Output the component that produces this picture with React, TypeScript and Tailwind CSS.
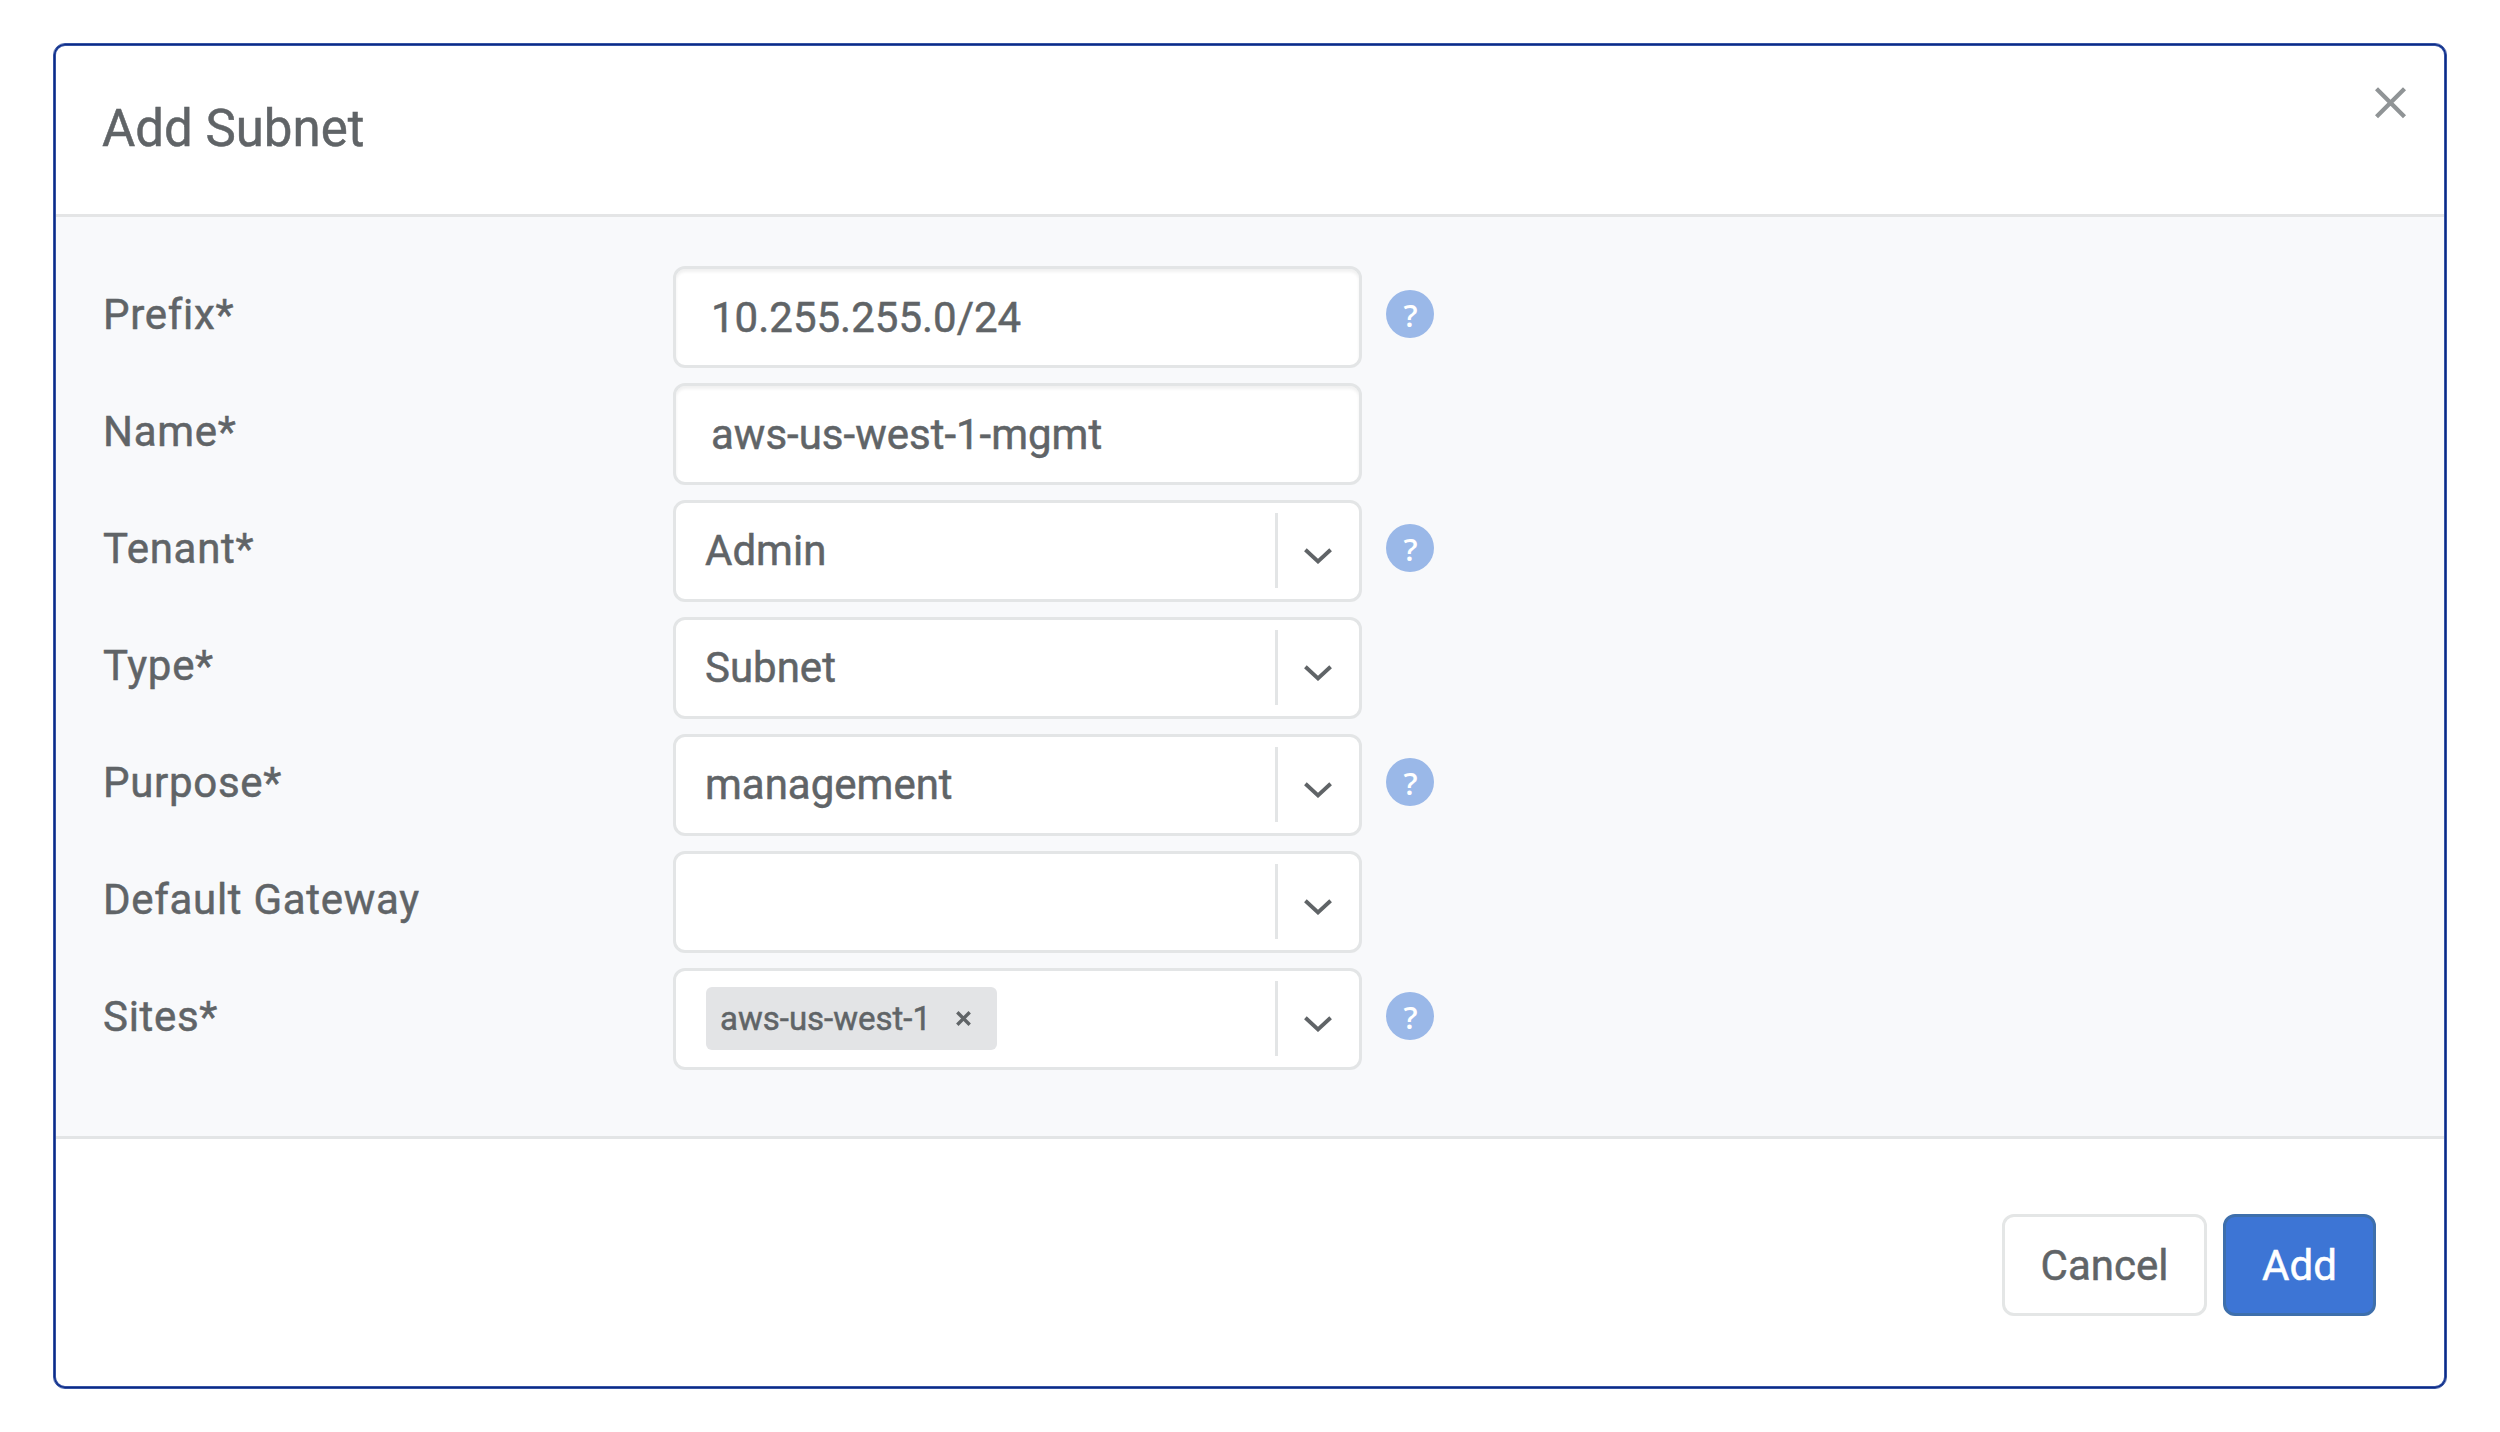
import type { ReactNode } from "react";

function Help() {
  return (
    <span className="mt-6 ml-6 flex size-12 shrink-0 items-center justify-center rounded-full bg-[#9ab8e8] pt-[3px] pl-px font-['Open_Sans'] text-[31px] leading-none font-semibold text-white [-webkit-text-stroke:0px]">
      ?
    </span>
  );
}

function Chevron() {
  return (
    <svg className="mt-[45px] ml-[26px] h-4 w-7" viewBox="0 0 28 16" fill="none" stroke="#606467" strokeWidth="3.9">
      <path d="M1.4 1.8 14 13.4 26.6 1.8" />
    </svg>
  );
}

function Input({ value }: { value: string }) {
  return (
    <div className="flex h-[102px] w-[689px] items-center rounded-xl border-[3px] border-[#e3e5e6] bg-white pl-[35px] shadow-[inset_0_3px_3px_rgba(0,0,0,0.06)]">
      {value}
    </div>
  );
}

function Select({ children }: { children?: ReactNode }) {
  return (
    <div className="flex h-[102px] w-[689px] rounded-xl border-[3px] border-[#e3e5e6] bg-white pl-[29px]">
      <div className="flex flex-1 items-center pb-0.5">{children}</div>
      <div className="mt-2.5 h-[75px] w-[3px] bg-[#e3e5e6]" />
      <div className="w-[81px]">
        <Chevron />
      </div>
    </div>
  );
}

function Chip({ label }: { label: string }) {
  return (
    <span className="mt-px ml-px flex h-[63px] w-[291px] items-center rounded-md bg-[#e3e4e6] pl-3.5 text-[33px]">
      <span className="w-[236px] pb-px">{label}</span>
      <svg className="size-[15px]" viewBox="0 0 15 15" stroke="#606467" strokeWidth="3.4">
        <path d="M1.3 1.3 13.7 13.7M13.7 1.3 1.3 13.7" />
      </svg>
    </span>
  );
}

function Row({ label, help, children }: { label: string; help?: boolean; children: ReactNode }) {
  return (
    <div className="flex h-[102px]">
      <div className="w-[571px] pt-6 pl-px tracking-[0.7px]">{label}</div>
      {children}
      {help && <Help />}
    </div>
  );
}

export default function App() {
  return (
    <div className="h-[1432px] w-[2500px] bg-white pt-[43px] pl-[53px] font-[Roboto,sans-serif] text-[42px] leading-[49px] text-[#606467] [-webkit-text-stroke:0.5px_currentColor]">
      <div className="flex h-[1346px] w-[2394px] flex-col overflow-hidden rounded-xl border border-[#3453a4] p-0.5 shadow-[inset_0_0_0_1px_#0c2a86,inset_0_0_0_2px_#3453a4]">
        <header className="flex h-[171px] shrink-0 justify-between border-b-[3px] border-[#e4e5e6] pr-[37px] pl-[46px]">
          <h1 className="pt-[53px] text-[51px] leading-[60px]">Add Subnet</h1>
          <svg className="mt-[41px] size-8" viewBox="0 0 32 32" stroke="#909496" strokeWidth="4.3">
            <path d="M1.5 1.8 29.5 29.8M29.5 1.8 1.5 29.8" />
          </svg>
        </header>
        <main className="flex h-[922px] shrink-0 flex-col gap-[15px] border-b-[3px] border-[#e3e5e6] bg-[#f8f9fb] pt-[49px] pl-[46px]">
          <Row label="Prefix*" help>
            <Input value="10.255.255.0/24" />
          </Row>
          <Row label="Name*">
            <Input value="aws-us-west-1-mgmt" />
          </Row>
          <Row label="Tenant*" help>
            <Select>Admin</Select>
          </Row>
          <Row label="Type*">
            <Select>Subnet</Select>
          </Row>
          <Row label="Purpose*" help>
            <Select>management</Select>
          </Row>
          <Row label="Default Gateway">
            <Select />
          </Row>
          <Row label="Sites*" help>
            <Select>
              <Chip label="aws-us-west-1" />
            </Select>
          </Row>
        </main>
        <footer className="flex justify-end gap-4 pt-[75px] pr-[68px]">
          <button className="h-[102px] w-[205px] rounded-xl border-[3px] border-[#e4e6e6] bg-white">Cancel</button>
          <button className="h-[102px] w-[153px] rounded-xl border-[3px] border-[#3e6fac] bg-[#3d75d5] text-white">Add</button>
        </footer>
      </div>
    </div>
  );
}
